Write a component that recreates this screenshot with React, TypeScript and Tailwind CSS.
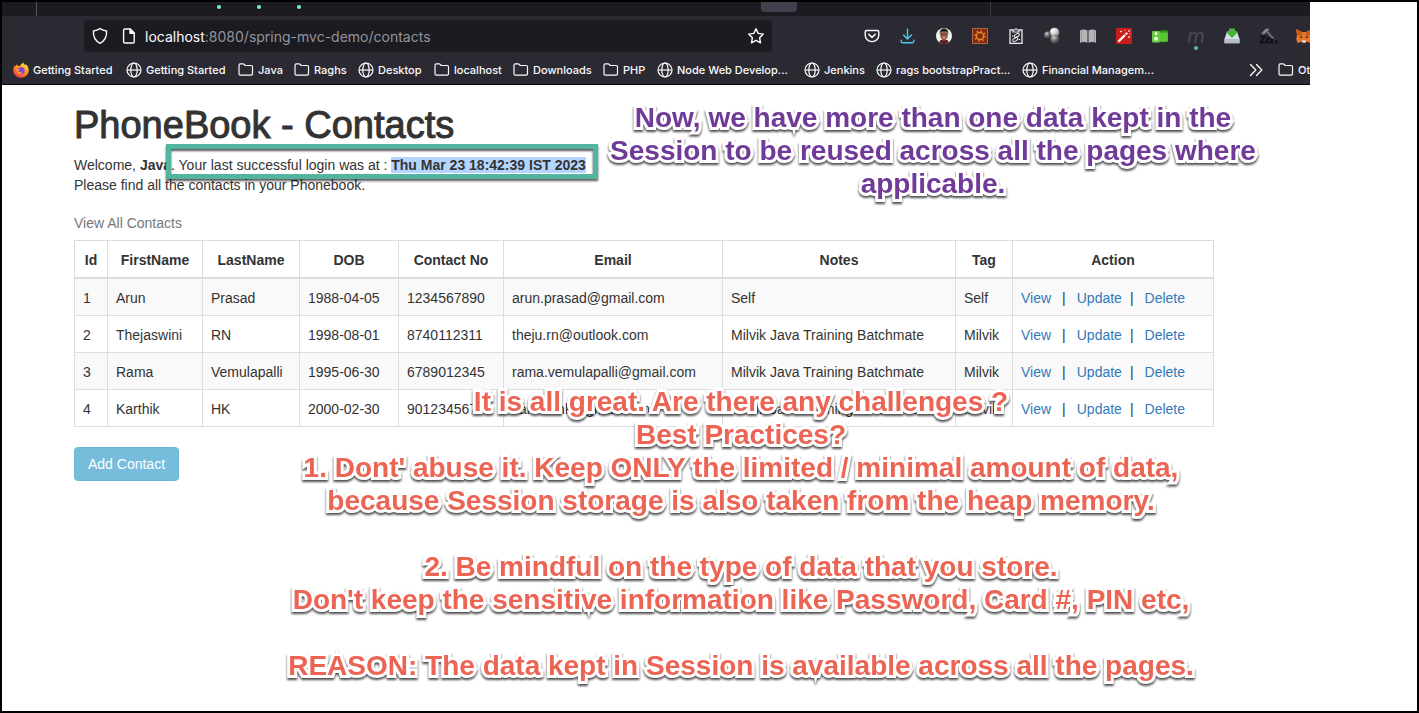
import React from "react";

type Bookmark = { label: string; kind: "firefox" | "globe" | "folder"; width: string };

const bookmarks: Bookmark[] = [
  { label: "Getting Started", kind: "firefox", width: "w-[113px]" },
  { label: "Getting Started", kind: "globe", width: "w-[112px]" },
  { label: "Java", kind: "folder", width: "w-[56px]" },
  { label: "Raghs", kind: "folder", width: "w-[64px]" },
  { label: "Desktop", kind: "globe", width: "w-[76px]" },
  { label: "localhost", kind: "folder", width: "w-[79px]" },
  { label: "Downloads", kind: "folder", width: "w-[90px]" },
  { label: "PHP", kind: "folder", width: "w-[54px]" },
  { label: "Node Web Develop...", kind: "globe", width: "w-[147px]" },
  { label: "Jenkins", kind: "globe", width: "w-[72px]" },
  { label: "rags bootstrapPract...", kind: "globe", width: "w-[146px]" },
  { label: "Financial Managem...", kind: "globe", width: "w-[146px]" },
];

const contacts = [
  ["1", "Arun", "Prasad", "1988-04-05", "1234567890", "arun.prasad@gmail.com", "Self", "Self"],
  ["2", "Thejaswini", "RN", "1998-08-01", "8740112311", "theju.rn@outlook.com", "Milvik Java Training Batchmate", "Milvik"],
  ["3", "Rama", "Vemulapalli", "1995-06-30", "6789012345", "rama.vemulapalli@gmail.com", "Milvik Java Training Batchmate", "Milvik"],
  ["4", "Karthik", "HK", "2000-02-30", "9012345678", "karthik.hk@gmail.com", "Milvik Java Training Batchmate", "Milvik"],
];

const columns = [
  { name: "Id", width: "w-[33px]" },
  { name: "FirstName", width: "w-[95px]" },
  { name: "LastName", width: "w-[97px]" },
  { name: "DOB", width: "w-[99px]" },
  { name: "Contact No", width: "w-[105px]" },
  { name: "Email", width: "w-[219px]" },
  { name: "Notes", width: "w-[233px]" },
  { name: "Tag", width: "w-[57px]" },
  { name: "Action", width: "w-auto" },
];

function FirefoxLogo() {
  return (
    <svg width="16" height="16" viewBox="0 0 16 16" className="shrink-0">
      <defs>
        <linearGradient id="fxBody" x1="0.8" y1="0.1" x2="0.2" y2="1">
          <stop offset="0" stopColor="#ffe24a" />
          <stop offset="0.45" stopColor="#ff8a1e" />
          <stop offset="1" stopColor="#f5305a" />
        </linearGradient>
      </defs>
      <path d="M10 .3c.4 1.300 1.300 2 2.300 2.900.3-.5.2-.8.2-1.100C14.600 3.600 15.700 6 15.700 8.300c0 4.200-3.400 7.500-7.700 7.500S.3 12.500.3 8.300c0-2 .6-3.700 1.700-5 0 .5.100 1 .3 1.300.4-1 1-1.900 1.900-2.400-.1.600 0 1.100.3 1.500.9 0 1.700.1 2.400.5C7.300 2.800 8.900 2 10 .3z" fill="url(#fxBody)" />
      <circle cx="8.200" cy="8.700" r="3.400" fill="#7b43e0" />
      <path d="M3.300 7.200c1.600-.6 2.800-.1 3.800.8-1.200.2-1.700.8-1.700 1.500 1.300 1 3 .8 4-.3-.3 2-1.700 2.900-3.100 2.800-1.900-.2-3.300-2.200-3-4.800z" fill="#ff9a2b" />
    </svg>
  );
}

function FolderIcon() {
  return (
    <svg width="16" height="16" viewBox="0 0 16 16" fill="none" stroke="#fbfbfe" strokeWidth="1.200" className="shrink-0">
      <path d="M1 3.200c0-.8.500-1.300 1.300-1.300h2.900c.5 0 .8.200 1.100.6l.9 1h6c.8 0 1.300.500 1.300 1.300v7c0 .8-.5 1.300-1.300 1.300H2.300c-.8 0-1.300-.5-1.300-1.300z" />
    </svg>
  );
}

function BookmarkIcon({ kind }: { kind: Bookmark["kind"] }) {
  if (kind === "firefox") return <FirefoxLogo />;
  if (kind === "globe")
    return (
      <svg width="16" height="16" viewBox="0 0 16 16" fill="none" stroke="#fbfbfe" strokeWidth="1.200" className="shrink-0">
        <circle cx="8" cy="8" r="7" />
        <ellipse cx="8" cy="8" rx="3.200" ry="7" />
        <path d="M1.200 8h13.600" />
      </svg>
    );
  return <FolderIcon />;
}

function ToolIcon({ label, children }: { label: string; children: React.ReactNode }) {
  return (
    <button type="button" aria-label={label} className="flex h-9 w-9 shrink-0 items-center justify-center">
      <svg width="18" height="18" viewBox="0 0 18 18" fill="none" className="overflow-visible">
        {children}
      </svg>
    </button>
  );
}

function Extensions() {
  return (
    <div className="flex w-[456px] shrink-0 overflow-hidden">
      <ToolIcon label="Pocket">
        <path d="M3.500 3.500h11c.8 0 1.300.5 1.300 1.300v3.500a6.800 6.300 0 0 1-13.600 0V4.800c0-.8.5-1.300 1.300-1.300z" stroke="#fbfbfe" strokeWidth="1.400" />
        <path d="M5.700 7.300 9 10.400l3.300-3.100" stroke="#fbfbfe" strokeWidth="1.500" strokeLinecap="round" strokeLinejoin="round" />
      </ToolIcon>
      <ToolIcon label="Downloads">
        <path d="M8.500 2v9.500M4.500 8l4 4 4-4M2.200 13.200v1c0 1 .7 1.600 1.600 1.600h9.400c.9 0 1.600-.6 1.600-1.600v-1" stroke="#4dc9f5" strokeWidth="1.400" strokeLinecap="round" strokeLinejoin="round" />
      </ToolIcon>
      <ToolIcon label="Profile">
        <circle cx="9" cy="9" r="8" fill="#f1f1f1" />
        <path d="M4 15.200c1-2 3-2.600 5-2.600s4 .6 5 2.600A8 8 0 0 1 4 15.200z" fill="#5a2028" />
        <ellipse cx="9" cy="7.800" rx="3.900" ry="5.600" fill="#9b6048" />
        <path d="M4.800 7.300C4.200 3.700 6.200 1.500 9 1.500s4.800 2.200 4.200 5.800c-.6-1.700-1-2.700-1.700-3-1.700.4-3.500.4-5 0-.8.300-1.200 1.300-1.700 3z" fill="#1d1718" />
        <path d="M5.800 7.300h2.600M9.600 7.300h2.600" stroke="#4a2f28" strokeWidth="1" />
        <path d="M7.500 10.700h3" stroke="#d9bdb0" strokeWidth=".8" />
      </ToolIcon>
      <ToolIcon label="Sun extension">
        <rect x="1.500" y="1.500" width="15" height="15" fill="#8c2a0e" stroke="#a8694a" />
        <circle cx="9" cy="9" r="3.600" stroke="#e2952f" strokeWidth="1.300" />
        <circle cx="9" cy="9" r="5" stroke="#e2952f" strokeWidth="1.600" strokeDasharray="1.300 2.630" />
      </ToolIcon>
      <ToolIcon label="Clipboard link">
        <path d="M6 3H3v13.300h12V3h-3" stroke="#ececf0" strokeWidth="1.300" />
        <path d="M6 5V3h1.700a1.300 1.300 0 0 1 2.600 0H12v2z" stroke="#ececf0" strokeWidth="1.100" />
        <g stroke="#ececf0" strokeWidth="1">
          <rect x="7.200" y="6.900" width="5.200" height="3" rx="1.500" transform="rotate(-35 9.800 8.400)" />
          <rect x="5.600" y="11" width="5.200" height="3" rx="1.500" transform="rotate(-35 8.200 12.500)" />
          <path d="m7.800 11.800 2.400-2.600M5 9h1.500M11.500 12.500h1.600" />
        </g>
      </ToolIcon>
      <ToolIcon label="Spheres">
        <defs>
          <radialGradient id="ballLight" cx="0.35" cy="0.3" r="0.8">
            <stop offset="0" stopColor="#fff" />
            <stop offset="0.5" stopColor="#ccc" />
            <stop offset="1" stopColor="#6a6a6a" />
          </radialGradient>
          <radialGradient id="ballDark" cx="0.4" cy="0.3" r="0.8">
            <stop offset="0" stopColor="#ccc" />
            <stop offset="0.5" stopColor="#666" />
            <stop offset="1" stopColor="#222" />
          </radialGradient>
        </defs>
        <circle cx="11.500" cy="5.500" r="4.800" fill="url(#ballLight)" />
        <circle cx="4.500" cy="8" r="3.500" fill="url(#ballDark)" />
        <circle cx="11.800" cy="12.300" r="4.600" fill="url(#ballDark)" />
      </ToolIcon>
      <ToolIcon label="Reader">
        <path d="M1 3.200c2.500-1 5-1 7.500.3v12.300c-2.500-1-5-1-7.500 0zM17 3.200c-2.500-1-5-1-7.500.3v12.300c2.500-1 5-1 7.500 0z" fill="#b5b5b8" />
        <path d="M2.500 3v12M15.500 3v12" stroke="#929296" strokeWidth=".8" />
      </ToolIcon>
      <ToolIcon label="Magic wand">
        <rect x="1" y="1" width="16" height="16" fill="#c81e1a" />
        <path d="M3.300 14.700 10 8" stroke="#fff" strokeWidth="2.200" />
        <path d="m10.500 7.500 1.800-1.800" stroke="#ffd9d3" strokeWidth="2.200" />
        <path d="M6 3.500v2M5 4.500h2M14 3v2M13 4h2M14 9v2M13 10h2M10 2.800v1M15.500 7h-1" stroke="#ffd9d3" strokeWidth=".9" />
      </ToolIcon>
      <ToolIcon label="Green folder">
        <path d="M8 4.800 9.500 3.200h5.700c1 0 1.800.7 1.800 1.600v8.400c0 1-.8 1.800-1.800 1.800H8z" fill="#2f8f1c" />
        <rect x="8" y="5.500" width="8.800" height="9.300" rx="1" fill="#5ac335" />
        <rect x="1" y="4" width="8" height="11.500" rx="1" fill="#63cd3d" />
        <path d="M5 5.500v3M3.700 7 5 5.600 6.300 7" stroke="#fff" strokeWidth="1.200" />
        <path d="M3.200 10h3.600v3.500H3.200z" fill="#eaffe2" />
      </ToolIcon>
      <button type="button" aria-label="m extension" className="relative flex h-9 w-9 shrink-0 items-center justify-center">
        <span className="text-[20px] leading-5 text-[#4b4a52] italic">m</span>
        <span className="absolute bottom-1 left-4 size-1 rounded-full bg-[#54c4a7]" />
      </button>
      <ToolIcon label="Save to tray">
        <path d="M4 4.500h10l2.500 7.500v4.200h-15V12z" fill="#d7dfeb" />
        <path d="M1.500 12h15v4.200h-15z" fill="#b3bccb" />
        <path d="M6 1.500h6v3.500h3L9 11 3 5h3z" fill="#46b436" />
      </ToolIcon>
      <ToolIcon label="Hammer">
        <path d="M2.500 6.500 6 2.200c1.500-1 3-.8 4.500.2L8.500 4 5 7.500z" fill="#85898e" />
        <path d="m8 4.500 7 8" stroke="#6e7378" strokeWidth="2" />
        <path d="M1 9.800h4.500l-4 5.700H6M7 11.500h3l-3 4h3.300M11.500 12.500H14l-2.500 3h2.700M16.500 14h.8l-.8 1.500h1" stroke="#0d0c10" strokeWidth="1.500" />
      </ToolIcon>
      <ToolIcon label="Fox wallet">
        <path d="m1 2 6 3h4l6-3-1 6 .8 4-1.300 4-4-1.200L10 16H8l-1.500-1.200-4 1.200L1.200 12 2 8z" fill="#e8762b" />
        <path d="m1 2 6 3 .5 4L2 8zM17 2l-6 3-.5 4L16 8z" fill="#c75c1d" />
        <path d="m4.500 9.500 2.500.3.500 1.200-2-.3zM13.500 9.500l-2.500.3-.5 1.200 2-.3z" fill="#2a1b14" />
        <path d="M7.500 13h3l.3 2-1 .7H8.200l-1-.7z" fill="#ded3cb" />
      </ToolIcon>
    </div>
  );
}

function Browser() {
  return (
    <header className="mr-[107px] overflow-hidden border-b border-black bg-[#2b2a33] font-[Inter,sans-serif]">
      <div className="relative h-[14px] bg-[#1c1b22]">
        <span className="absolute left-[34px] h-full w-px bg-[#55545e]" />
        <span className="absolute top-[3px] left-[215px] size-1 rounded-full bg-[#74f5bd]" />
        <span className="absolute top-[3px] left-[255px] size-1 rounded-full bg-[#74f5bd]" />
        <span className="absolute top-[3px] left-[295px] size-1 rounded-full bg-[#74f5bd]" />
        <span className="absolute left-[759px] h-[10px] w-9 rounded-b bg-[#42414d]" />
        <span className="absolute left-[988px] h-full w-px bg-[#3a3942]" />
      </div>
      <div className="flex h-10 items-center pl-[82px]">
        <div className="mr-[82px] flex h-8 min-w-0 flex-1 items-center rounded bg-[#1c1b22] px-[7px]">
          <svg width="18" height="18" viewBox="0 0 18 18" fill="none" stroke="#fbfbfe" strokeWidth="1.400" strokeLinejoin="round" className="shrink-0">
            <path d="M9 1.700c2 1.300 4 2 6.600 2.300.3 5.200-1.600 9.700-6.600 12.300C4 13.700 2.100 9.200 2.400 4 5 3.700 7 3 9 1.700z" />
          </svg>
          <svg width="16" height="18" viewBox="0 0 16 18" fill="none" stroke="#fbfbfe" strokeWidth="1.400" strokeLinejoin="round" className="ml-3 shrink-0">
            <path d="M3.800 2h5.400l4 4v8.800c0 .8-.4 1.200-1.200 1.200H3.800c-.8 0-1.200-.4-1.200-1.200V3.200C2.600 2.400 3 2 3.800 2z" />
            <path d="M9 2v4.200h4.200z" fill="#fbfbfe" />
          </svg>
          <p className="ml-2 flex-1 truncate pt-px text-[14px] text-[#94939b]">
            <span className="text-[#fbfbfe]">localhost</span>:8080/spring-mvc-demo/contacts
          </p>
          <button type="button" aria-label="Bookmark this page">
            <svg width="18" height="18" viewBox="0 0 18 18" fill="none" stroke="#fbfbfe" strokeWidth="1.400" strokeLinejoin="round">
              <path d="m9 1.700 2.200 4.700 5.100.7-3.700 3.600.9 5.100L9 13.300l-4.500 2.500.9-5.100L1.700 7.100l5.100-.7z" />
            </svg>
          </button>
        </div>
        <Extensions />
      </div>
      <nav className="flex h-7 items-center pl-[11px] text-[11px] font-medium whitespace-nowrap text-[#fbfbfe]">
        {bookmarks.map((b, i) => (
          <a key={i} href="#" className={`flex shrink-0 items-center gap-1 ${b.width}`}>
            <BookmarkIcon kind={b.kind} />
            {b.label}
          </a>
        ))}
        <div className="ml-auto flex w-[62px] shrink-0 items-center overflow-hidden">
          <button type="button" aria-label="More bookmarks">
            <svg width="16" height="16" viewBox="0 0 16 16" fill="none" stroke="#fbfbfe" strokeWidth="1.300" strokeLinecap="round" strokeLinejoin="round">
              <path d="m2.500 2.500 5.300 5.500-5.300 5.500M8.500 2.500l5.300 5.500-5.300 5.500" />
            </svg>
          </button>
          <a href="#" className="ml-[14px] flex items-center gap-1">
            <FolderIcon />
            Ot
          </a>
        </div>
      </nav>
    </header>
  );
}

export default function App() {
  return (
    <div className="relative min-h-screen overflow-hidden border-2 border-black bg-white font-['Liberation_Sans',Arial,sans-serif] text-[14px] leading-5 text-[#333]">
      <Browser />
      <main className="pt-5 pr-[203px] pl-[72px]">
        <h1 className="text-[38px] leading-10 font-medium [-webkit-text-stroke:1px_#333]">PhoneBook - Contacts</h1>
        <div className="relative mt-[10px]">
          <p>
            Welcome, <b>Java</b>. Your last successful login was at :{" "}
            <b className="bg-[#b4d5fe]">Thu Mar 23 18:42:39 IST 2023</b>
          </p>
          <p>Please find all the contacts in your Phonebook.</p>
          <span className="absolute -top-[11px] left-[92px] h-[35px] w-[432px] border-5 border-[#53b59f] drop-shadow-[0_2px_1px_rgba(0,0,0,0.65)]" />
        </div>
        <table className="mt-[18px] w-full table-fixed border-collapse border border-[#ddd]">
          <caption className="pb-[7px] text-left text-[#777]">View All Contacts</caption>
          <thead>
            <tr>
              {columns.map((c) => (
                <th key={c.name} className={`border border-b-2 border-[#ddd] px-2 pt-[9px] pb-[7px] text-center ${c.width}`}>{c.name}</th>
              ))}
            </tr>
          </thead>
          <tbody>
            {contacts.map((row) => (
              <tr key={row[0]} className="odd:bg-[#f9f9f9]">
                {row.map((cell, i) => (
                  <td key={i} className="border border-[#ddd] px-2 pt-[9px] pb-[7px] whitespace-nowrap">{cell}</td>
                ))}
                <td className="border border-[#ddd] px-2 pt-[9px] pb-[7px] whitespace-nowrap">
                  <a href="#" className="text-[#337ab7]">View</a>
                  <span className="mx-[11px]">|</span>
                  <a href="#" className="text-[#337ab7]">Update</a>
                  <span className="mr-[11px] ml-2">|</span>
                  <a href="#" className="text-[#337ab7]">Delete</a>
                </td>
              </tr>
            ))}
          </tbody>
        </table>
        <button type="button" className="mt-5 rounded border border-[#68b8d8] bg-[#76bddc] px-[13px] py-[6px] text-white">
          Add Contact
        </button>
      </main>

      <aside className="absolute top-[99px] left-[601px] w-[660px] text-center text-[28px] leading-[33px] font-bold whitespace-nowrap text-[#703a99] drop-shadow-[0_2px_1px_rgba(0,0,0,0.7)] [-webkit-text-stroke:6px_white] [paint-order:stroke_fill] [stroke-linejoin:round]">
        <p>Now, we have more than one data kept in the</p>
        <p>Session to be reused across all the pages where</p>
        <p>applicable.</p>
      </aside>
      <aside className="absolute top-[383px] left-[279px] w-[920px] text-center text-[28px] leading-[33px] font-bold whitespace-nowrap text-[#ec6453] drop-shadow-[0_2px_1px_rgba(0,0,0,0.7)] [-webkit-text-stroke:6px_white] [paint-order:stroke_fill] [stroke-linejoin:round]">
        <p>It is all great. Are there any challenges ?</p>
        <p>Best Practices?</p>
        <p>1. Dont' abuse it. Keep ONLY the limited / minimal amount of data,</p>
        <p>because Session storage is also taken from the heap memory.</p>
        <p className="mt-[33px]">2. Be mindful on the type of data that you store.</p>
        <p>Don't keep the sensitive information like Password, Card #, PIN etc,</p>
        <p className="mt-[33px]">REASON: The data kept in Session is available across all the pages.</p>
      </aside>
    </div>
  );
}
